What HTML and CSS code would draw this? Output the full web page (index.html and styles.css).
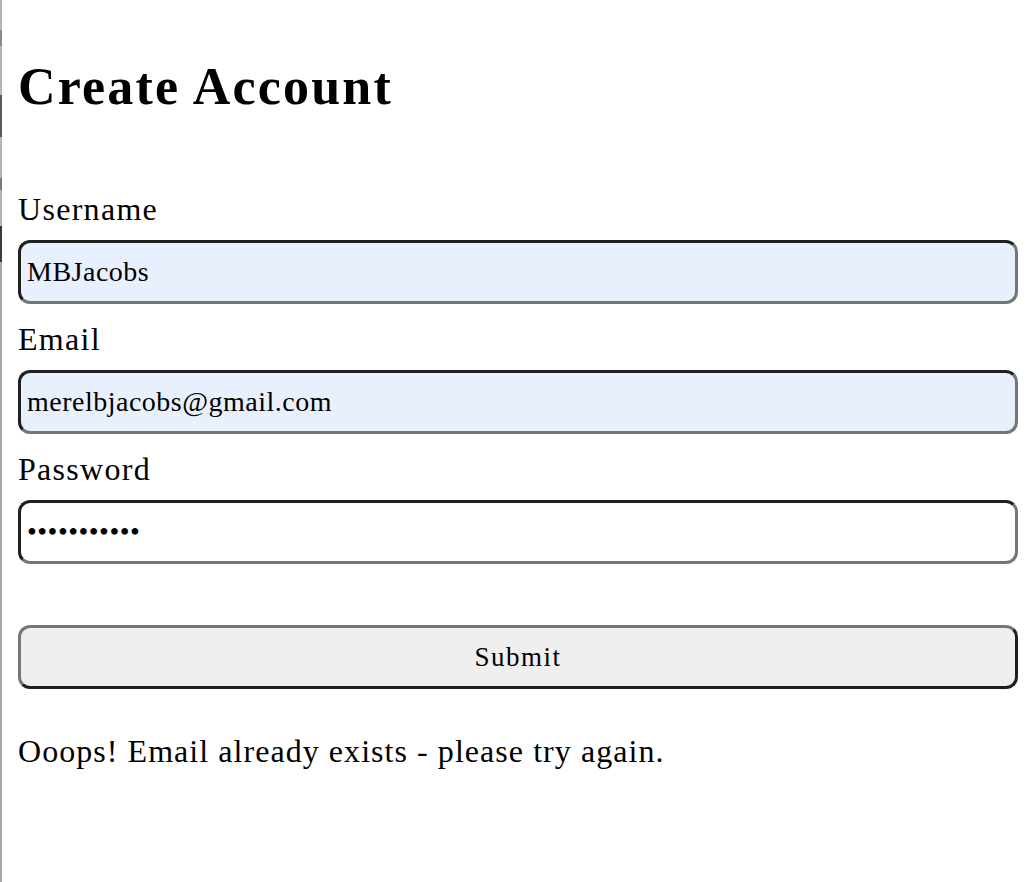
FILE: index.html
```html
<!DOCTYPE html>
<html>
<head>
<meta charset="utf-8">
<link rel="stylesheet" href="styles.css">
</head>
<body>
<div class="frame">
  <div class="edge"></div>
  <main class="page">
    <h1 class="title">Create Account</h1>
    <form class="form">
      <label class="label" for="u">Username</label>
      <input class="field autofill" id="u" type="text" value="MBJacobs">
      <label class="label" for="e">Email</label>
      <input class="field autofill" id="e" type="text" value="merelbjacobs@gmail.com">
      <label class="label" for="p">Password</label>
      <input class="field" id="p" type="password" value="abcdefghijk">
      <button class="submit" type="button">Submit</button>
    </form>
    <p class="error">Ooops! Email already exists - please try again.</p>
  </main>
</div>
</body>
</html>
```

FILE: styles.css
```css
html, body {
  margin: 0;
  padding: 0;
  background: #fff;
}
.frame {
  display: flex;
  min-height: 882px;
}
.edge {
  width: 2px;
  flex: none;
  background: linear-gradient(to bottom,
    #b4b4b4 0, #b4b4b4 30px,
    #8a8a8a 30px, #8a8a8a 46px,
    #b4b4b4 46px, #b4b4b4 95px,
    #5a5a5a 95px, #5a5a5a 137px,
    #b4b4b4 137px, #b4b4b4 178px,
    #7a7a7a 178px, #7a7a7a 190px,
    #b4b4b4 190px, #b4b4b4 226px,
    #3a3a3a 226px, #3a3a3a 262px,
    #a8a8a8 262px, #a8a8a8 100%);
}
.page {
  flex: 1;
  padding: 0 12px 0 16px;
  font-family: "Liberation Serif", "DejaVu Serif", serif;
  color: #000;
}
.title {
  margin: 59px 0 0 0;
  font-size: 52px;
  line-height: 56px;
  font-weight: 700;
  letter-spacing: 2.2px;
}
.form {
  display: flex;
  flex-direction: column;
  margin-top: 76px;
}
.label {
  font-size: 32px;
  line-height: 37px;
  margin-bottom: 12px;
  letter-spacing: 1.3px;
}
.field {
  box-sizing: border-box;
  height: 64px;
  width: 100%;
  margin: 0 0 17px 0;
  padding: 0 6px;
  border: 3px solid;
  border-color: #202020 #767676 #767676 #202020;
  border-radius: 12px;
  font-family: "Liberation Serif", "DejaVu Serif", serif;
  font-size: 28px;
  letter-spacing: 0.5px;
  color: #000;
  background: #fff;
  outline: none;
}
.field.autofill {
  background: #e8f0fe;
}
.submit {
  box-sizing: border-box;
  height: 64px;
  width: 100%;
  margin-top: 44px;
  border: 3px solid;
  border-color: #767676 #202020 #202020 #767676;
  border-radius: 12px;
  background: #efefef;
  font-family: "Liberation Serif", "DejaVu Serif", serif;
  font-size: 27px;
  letter-spacing: 1.5px;
  color: #000;
}
.error {
  margin: 44px 0 0 0;
  font-size: 32px;
  line-height: 37px;
  letter-spacing: 1.05px;
}
```
